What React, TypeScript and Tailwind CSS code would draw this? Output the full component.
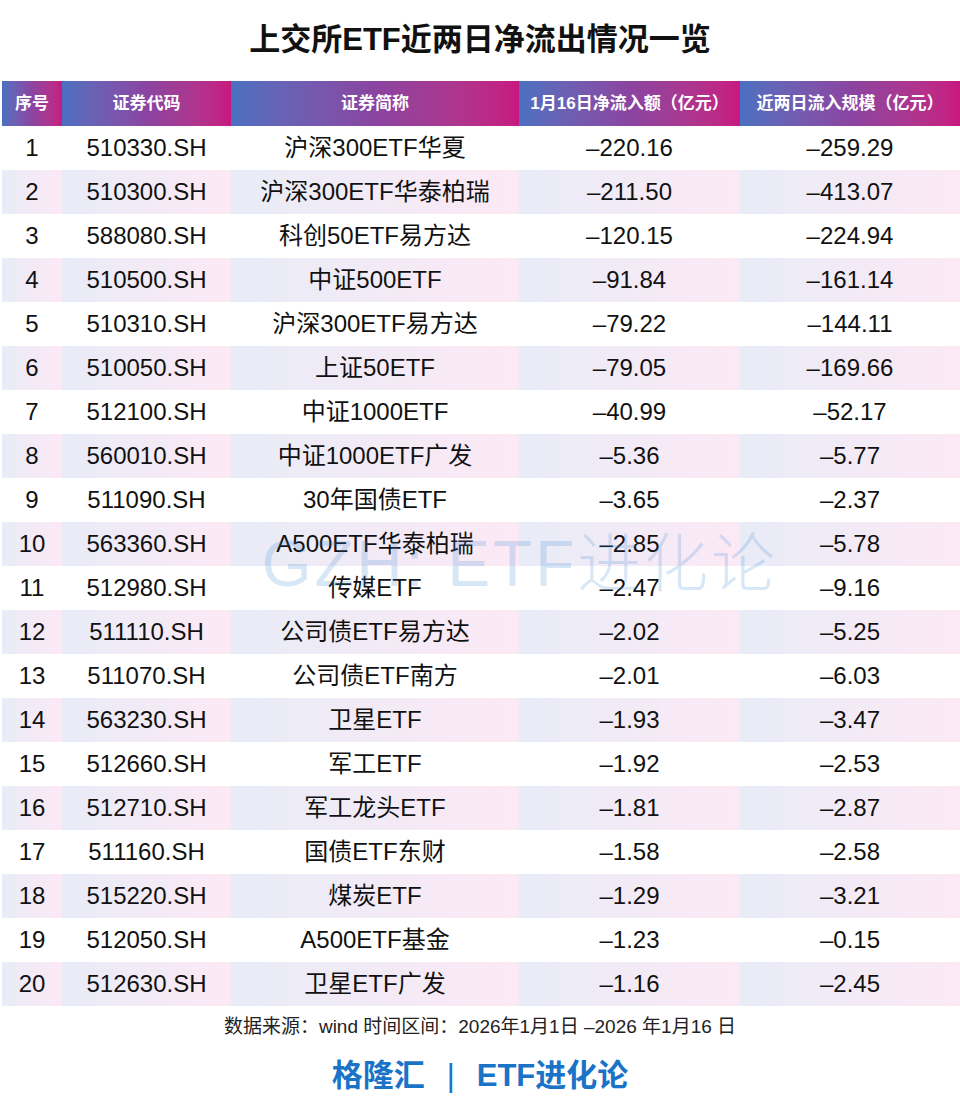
import React from "react";

const rows: [string, string, string, string, string][] = [
  ["1", "510330.SH", "沪深300ETF华夏", "–220.16", "–259.29"],
  ["2", "510300.SH", "沪深300ETF华泰柏瑞", "–211.50", "–413.07"],
  ["3", "588080.SH", "科创50ETF易方达", "–120.15", "–224.94"],
  ["4", "510500.SH", "中证500ETF", "–91.84", "–161.14"],
  ["5", "510310.SH", "沪深300ETF易方达", "–79.22", "–144.11"],
  ["6", "510050.SH", "上证50ETF", "–79.05", "–169.66"],
  ["7", "512100.SH", "中证1000ETF", "–40.99", "–52.17"],
  ["8", "560010.SH", "中证1000ETF广发", "–5.36", "–5.77"],
  ["9", "511090.SH", "30年国债ETF", "–3.65", "–2.37"],
  ["10", "563360.SH", "A500ETF华泰柏瑞", "–2.85", "–5.78"],
  ["11", "512980.SH", "传媒ETF", "–2.47", "–9.16"],
  ["12", "511110.SH", "公司债ETF易方达", "–2.02", "–5.25"],
  ["13", "511070.SH", "公司债ETF南方", "–2.01", "–6.03"],
  ["14", "563230.SH", "卫星ETF", "–1.93", "–3.47"],
  ["15", "512660.SH", "军工ETF", "–1.92", "–2.53"],
  ["16", "512710.SH", "军工龙头ETF", "–1.81", "–2.87"],
  ["17", "511160.SH", "国债ETF东财", "–1.58", "–2.58"],
  ["18", "515220.SH", "煤炭ETF", "–1.29", "–3.21"],
  ["19", "512050.SH", "A500ETF基金", "–1.23", "–0.15"],
  ["20", "512630.SH", "卫星ETF广发", "–1.16", "–2.45"],
];

const headers = ["序号", "证券代码", "证券简称", "1月16日净流入额（亿元）", "近两日流入规模（亿元）"];
const widths = ["w-[60px]", "w-[169px]", "w-[288px]", "w-[221px]", "w-[220px]"];

export default function App() {
  return (
    <div className="relative w-[960px] h-[1108px] bg-white overflow-hidden font-['Liberation_Sans','Noto_Sans_CJK_SC',sans-serif] text-[#111]">
      <div className="h-[81px] flex items-center justify-center pb-[1px]">
        <h1 className="text-[31px] font-bold text-[#111]">上交所ETF近两日净流出情况一览</h1>
      </div>
      <div className="pl-[2px]">
        <div className="flex h-[45px]">
          {headers.map((h, i) => (
            <div
              key={i}
              className={`${widths[i]} flex items-center justify-center bg-gradient-to-r from-[#4a70c1] via-[#8a44a1] to-[#c8177f] text-white text-[17px] font-bold`}
            >
              {h}
            </div>
          ))}
        </div>
        {rows.map((r, ri) => (
          <div key={ri} className="flex h-[44px]">
            {r.map((c, ci) => (
              <div
                key={ci}
                className={`${widths[ci]} flex items-center justify-center text-[24px] leading-none ${
                  ri % 2 === 1 ? "bg-gradient-to-r from-[#e8ecf7] to-[#fce9f5]" : "bg-white"
                }`}
              >
                {c}
              </div>
            ))}
          </div>
        ))}
      </div>
      <div className="h-[42px] flex items-center justify-center text-[19px] text-[#222]">
        数据来源：wind 时间区间：2026年1月1日 –2026 年1月16 日
      </div>
      <div className="h-[58px] flex items-center justify-center gap-[22px] text-[31px] font-bold text-[#1a73c6] pb-[2px]">
        <span>格隆汇</span>
        <span className="font-normal">|</span>
        <span>ETF进化论</span>
      </div>
      <div className="absolute left-0 right-0 top-[532px] flex justify-center pointer-events-none">
        <span className="ml-[80px] text-[64px] leading-none tracking-[3px] font-light text-[#3a86d4]/20 whitespace-nowrap">
          GZH: ETF进化论
        </span>
      </div>
    </div>
  );
}
